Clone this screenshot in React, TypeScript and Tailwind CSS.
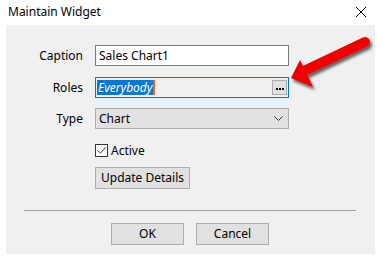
import React from 'react';

const font = { fontFamily: '"Noto Sans", "Liberation Sans", sans-serif' };

const Label = ({ children }: { children: React.ReactNode }) => (
  <div className="w-[78px] text-right pr-px text-[12px] text-[#000]">{children}</div>
);

const RedArrow = () => (
  <svg
    className="absolute left-[280px] top-[28px]"
    width="97"
    height="72"
    viewBox="280 28 97 72"
  >
    <defs>
      <filter id="sh" x="-20%" y="-20%" width="150%" height="150%">
        <feGaussianBlur in="SourceAlpha" stdDeviation="1.5" />
        <feOffset dx="2" dy="3" result="o" />
        <feComponentTransfer>
          <feFuncA type="linear" slope="0.6" />
        </feComponentTransfer>
        <feMerge>
          <feMergeNode />
          <feMergeNode in="SourceGraphic" />
        </feMerge>
      </filter>
    </defs>
    <g filter="url(#sh)">
      <line x1="365" y1="42" x2="306" y2="70" stroke="#ee0000" strokeWidth="10" strokeLinecap="round" />
      <polygon points="291,78 300,60 313,87" fill="#ee0000" />
    </g>
  </svg>
);

export default function App() {
  return (
    <div className="relative w-[377px] h-[256px] bg-white overflow-hidden" style={font}>
      <div className="h-[25px] flex items-center justify-between pl-2 pr-[10px]">
        <div className="text-[12px] text-[#000] -mt-[2px]">Maintain Widget</div>
        <svg width="12" height="12" viewBox="0 0 12 12" className="-mt-[2px]">
          <path d="M1 1 L11 11 M11 1 L1 11" stroke="#000" strokeWidth="1" />
        </svg>
      </div>
      <div className="ml-[6px] w-[369px] h-[229px] bg-[#f0f0f0] flex flex-col">
        <div className="mt-[20px] flex items-center gap-[11px]">
          <Label>Caption</Label>
          <div className="w-[194px] h-[21px] bg-white border border-[#7a7a7a] flex items-center px-[3px] text-[12px] text-[#000]">
            Sales Chart1
          </div>
        </div>
        <div className="mt-[11px] flex items-center gap-[11px]">
          <Label>Roles</Label>
          <div className="w-[194px] h-[21px] bg-[#f0f0f0] border border-[#0078d7] flex items-center pl-[1px] pr-px">
            <span className="bg-[#0078d7] text-white italic text-[12px] leading-[15px] px-px">Everybody</span>
            <span className="w-[2px] h-[15px] bg-[#e86b1a]" />
            <div className="ml-auto w-[15px] h-[15px] bg-[#e1e1e1] border border-[#adadad] flex items-end justify-center pb-[4px] gap-px">
              <span className="w-[2px] h-[2px] bg-[#000]" />
              <span className="w-[2px] h-[2px] bg-[#000]" />
              <span className="w-[2px] h-[2px] bg-[#000]" />
            </div>
          </div>
        </div>
        <div className="mt-[10px] flex items-center gap-[11px]">
          <Label>Type</Label>
          <div className="w-[194px] h-[21px] bg-[#e1e1e1] border border-[#adadad] flex items-center px-[3px] text-[12px] text-[#000]">
            Chart
            <svg width="9" height="5" viewBox="0 0 9 5" className="ml-auto mr-[2px]">
              <path d="M0.5 0.5 L4.5 4.5 L8.5 0.5" stroke="#333" fill="none" strokeWidth="1" />
            </svg>
          </div>
        </div>
        <div className="mt-[15px] ml-[89px] h-[13px] flex items-center gap-[3px]">
          <div className="w-[13px] h-[13px] bg-white border border-[#333] flex items-center justify-center">
            <svg width="9" height="7" viewBox="0 0 9 7">
              <path d="M0.5 3.5 L3.5 6 L8.5 0.5" stroke="#333" fill="none" strokeWidth="1" />
            </svg>
          </div>
          <span className="text-[12px] leading-[13px] text-[#000]">Active</span>
        </div>
        <div className="mt-[10px] ml-[89px] w-[95px] h-[22px] bg-[#e1e1e1] border border-[#adadad] flex items-center justify-center text-[12px] text-[#000]">
          Update Details
        </div>
        <div className="mt-[21px] ml-[18px] w-[332px] h-px bg-[#a0a0a0]" />
        <div className="mt-[12px] ml-[105px] flex gap-[12px]">
          <div className="w-[73px] h-[22px] bg-[#e1e1e1] border border-[#adadad] flex items-center justify-center text-[12px] text-[#000]">
            OK
          </div>
          <div className="w-[73px] h-[22px] bg-[#e1e1e1] border border-[#adadad] flex items-center justify-center text-[12px] text-[#000]">
            Cancel
          </div>
        </div>
      </div>
      <RedArrow />
    </div>
  );
}
